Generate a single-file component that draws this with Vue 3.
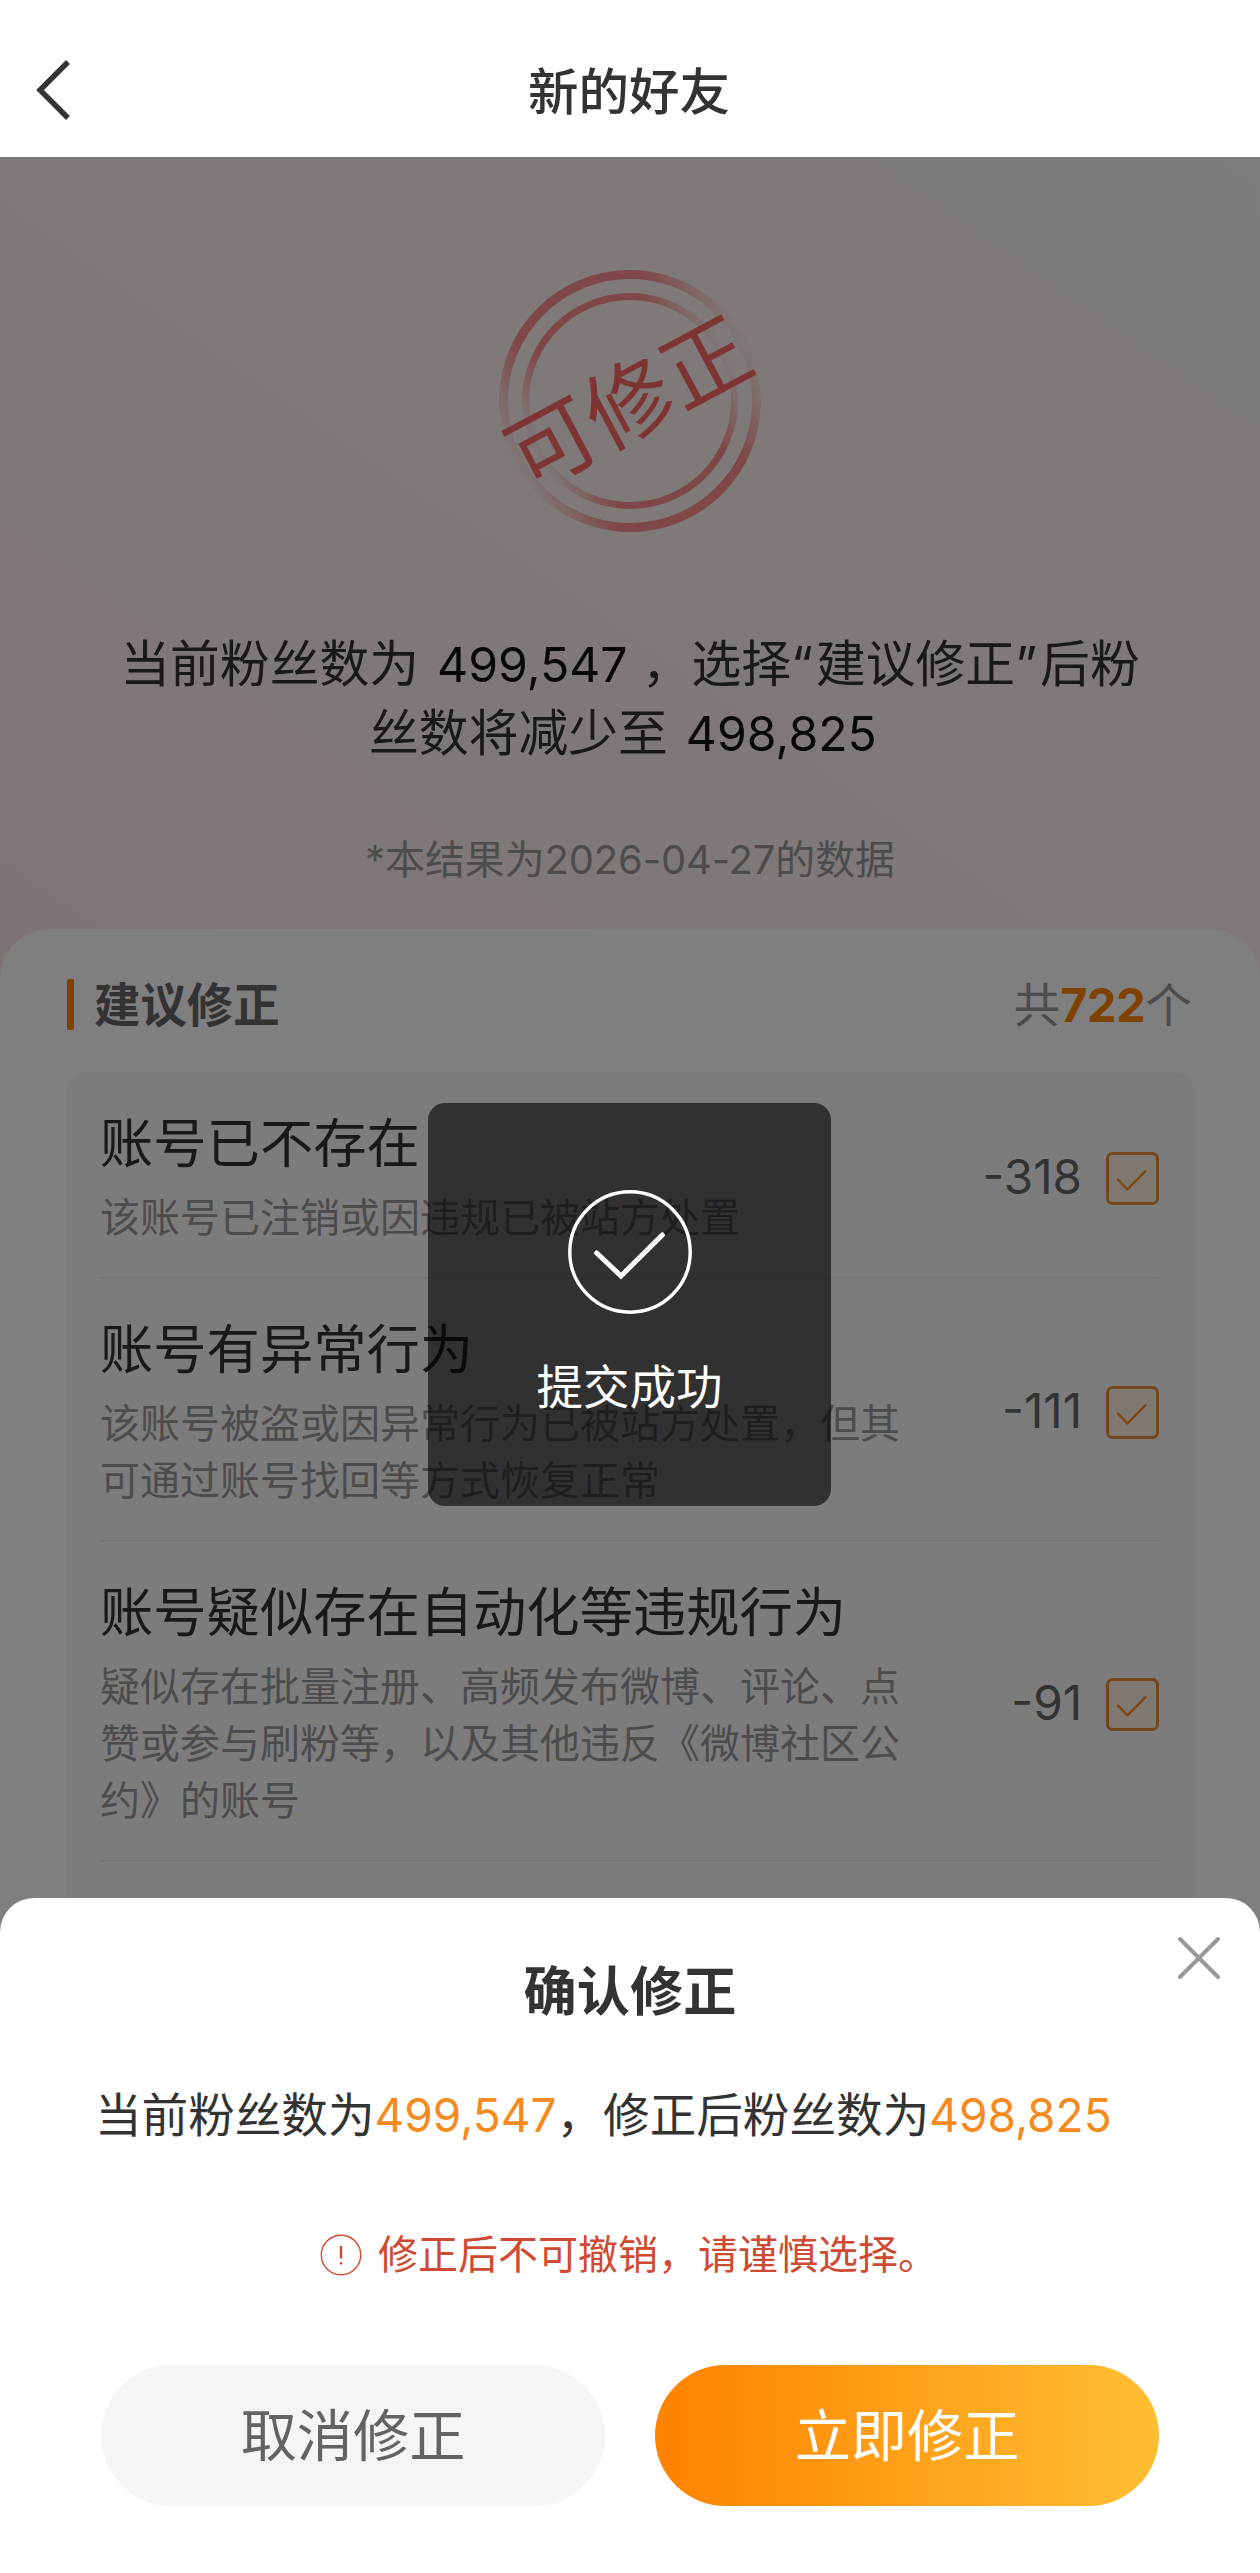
<script setup>
import { ref } from "vue";

const current = "499,547";
const fixed = "498,825";
const total = 722;

const items = ref([
  {
    name: "账号已不存在",
    desc: "该账号已注销或因违规已被站方处置",
    count: 318,
  },
  {
    name: "账号有异常行为",
    desc: "该账号被盗或因异常行为已被站方处置，但其可通过账号找回等方式恢复正常",
    count: 111,
  },
  {
    name: "账号疑似存在自动化等违规行为",
    desc: "疑似存在批量注册、高频发布微博、评论、点赞或参与刷粉等，以及其他违反《微博社区公约》的账号",
    count: 91,
  },
]);
</script>
<template>
  <div class="page">
    <header class="header">
      <svg class="header__back" viewBox="0 0 40 64">
        <path d="M35 4 L7 32 L35 60" />
      </svg>
      <h1 class="header__title">新的好友</h1>
    </header>
    <main class="content">
      <section class="result">
        <svg class="stamp" viewBox="-140 -140 280 280">
          <defs>
            <linearGradient id="ring" x1="0" x2="1" y1="0" y2="0">
              <stop offset="0" stop-color="#ff6464" stop-opacity="0.04" />
              <stop offset="0.05" stop-color="#ff6464" stop-opacity="0.2" />
              <stop offset="0.22" stop-color="#ff6464" stop-opacity="0.7" />
              <stop offset="0.78" stop-color="#ff6464" stop-opacity="0.7" />
              <stop offset="0.95" stop-color="#ff6464" stop-opacity="0.2" />
              <stop offset="1" stop-color="#ff6464" stop-opacity="0.04" />
            </linearGradient>
          </defs>
          <g transform="rotate(-28)">
            <circle r="126.5" stroke-width="9" />
            <circle r="104.5" stroke-width="7" />
            <text x="-2" y="33" text-anchor="middle">可修正</text>
          </g>
        </svg>
        <p class="result__text">
          当前粉丝数为 <b>{{ current }}</b> ，选择<i>“</i>建议修正<i>”</i>后粉<br />丝数将减少至
          <b>{{ fixed }}</b>&nbsp;
        </p>
        <p class="result__date">*本结果为<span>2026-04-27</span>的数据</p>
      </section>
      <section class="card">
        <div class="card__head">
          <h2 class="card__title">建议修正</h2>
          <span class="card__total">共<b>{{ total }}</b>个</span>
        </div>
        <ul class="list">
          <li v-for="item in items" :key="item.name" class="list__item">
            <div class="list__info">
              <h3 class="list__name">{{ item.name }}</h3>
              <p class="list__desc">{{ item.desc }}</p>
            </div>
            <span class="list__count">-{{ item.count }}</span>
            <svg class="list__check" viewBox="0 0 53 53">
              <rect x="1.5" y="1.5" width="50" height="50" rx="5" />
              <path d="M12 27.7 L21.5 37.5 L39.5 19" />
            </svg>
          </li>
        </ul>
      </section>
    </main>
    <div class="mask"></div>
    <div class="toast">
      <svg class="toast__icon" viewBox="0 0 124 124">
        <circle cx="62" cy="62" r="60.2" />
        <path d="M28.7 63 L53 86 L94.3 45" />
      </svg>
      <span class="toast__text">提交成功</span>
    </div>
    <div class="sheet">
      <svg class="sheet__close" viewBox="0 0 44 44">
        <path d="M3 3 L41 41 M41 3 L3 41" />
      </svg>
      <h2 class="sheet__title">确认修正</h2>
      <p class="sheet__text">
        当前粉丝数为<em>{{ current }}</em>，修正后粉丝数为<em>{{ fixed }}</em>
      </p>
      <p class="sheet__warn">
        <svg viewBox="0 0 42 42">
          <circle cx="21" cy="21" r="19.7" />
          <path d="M21 12 V24.5 M21 28.2 V30.4" />
        </svg>
        <span>修正后不可撤销，请谨慎选择。</span>
      </p>
      <div class="sheet__buttons">
        <button class="btn">取消修正</button>
        <button class="btn btn--primary">立即修正</button>
      </div>
    </div>
  </div>
</template>
<style>
body {
  margin: 0;
}
</style>
<style scoped>
.page {
  position: relative;
  width: 1260px;
  height: 2573px;
  overflow: hidden;
  display: flex;
  flex-direction: column;
  background: #fff;
  font-family: Inter, "Noto Sans CJK SC", sans-serif;
}
h1,
h2,
h3,
p,
ul {
  margin: 0;
  padding: 0;
}
.header {
  height: 157px;
  flex-shrink: 0;
  display: flex;
  align-items: flex-start;
  box-sizing: border-box;
  padding: 58px 33px 0 33px;
}
.header__back {
  width: 40px;
  height: 64px;
  fill: none;
  stroke: #333;
  stroke-width: 5.4;
}
.header__title {
  flex: 1;
  margin: 1px 42px 0 0;
  text-align: center;
  font-weight: 500;
  font-size: 50.5px;
  line-height: 66px;
  color: #333;
}
.content {
  flex: 1;
  display: flex;
  flex-direction: column;
  overflow: hidden;
  background: linear-gradient(
    215deg,
    #fcfafb 0,
    #fbf8f9 205px,
    #fff3f2 235px,
    #fff1f1 880px,
    #ffefef 1110px,
    #ffecec 1180px,
    #ffe8e9 1400px
  );
}
.result {
  height: 772px;
  flex-shrink: 0;
  display: flex;
  flex-direction: column;
  align-items: center;
  box-sizing: border-box;
  padding-top: 104px;
}
.stamp {
  width: 280px;
  height: 280px;
  margin-right: 1px;
}
.stamp circle {
  fill: none;
  stroke: url(#ring);
}
.stamp text {
  font-size: 87px;
  fill: #ff6868;
}
.result__text {
  margin-top: 89px;
  text-align: center;
  font-size: 49.8px;
  line-height: 69px;
  color: #333;
}
.result__text b {
  margin-left: 4px;
  font-weight: 400;
  font-size: 48.2px;
  color: #111;
}
.result__text i {
  padding-right: 3px;
  font-style: normal;
}
.result__date {
  margin-top: 62px;
  font-size: 39.9px;
  line-height: 60px;
  color: #999;
}
.result__date span {
  letter-spacing: -0.1px;
}
.card {
  flex: 1;
  display: flex;
  flex-direction: column;
  padding: 0 67px;
  background: #fff;
  border-radius: 50px 50px 0 0;
}
.card__head {
  height: 144px;
  flex-shrink: 0;
  display: flex;
  align-items: center;
  justify-content: space-between;
  box-sizing: border-box;
  padding-top: 7px;
}
.card__title {
  display: flex;
  align-items: center;
  font-weight: 700;
  font-size: 46.4px;
  line-height: 60px;
  color: #666;
}
.card__title::before {
  content: "";
  width: 7px;
  height: 51px;
  margin-right: 20px;
  border-radius: 2px;
  background: #ff8200;
}
.card__total {
  margin-right: 1px;
  font-size: 46.7px;
  line-height: 60px;
  color: #999;
}
.card__total b {
  font-weight: 700;
  letter-spacing: -0.3px;
  color: #ff8200;
}
.list {
  flex: 1;
  padding: 0 34px 0 33px;
  list-style: none;
  background: #f9f9f9;
  border-radius: 17px 17px 0 0;
}
.list__item {
  display: flex;
  align-items: center;
  padding: 39px 0 31px;
  border-bottom: 2px solid #ececec;
}
.list__info {
  width: 804px;
}
.list__name {
  margin-bottom: 13px;
  font-weight: 400;
  font-size: 53.3px;
  line-height: 64px;
  color: #333;
}
.list__desc {
  font-size: 40px;
  line-height: 57px;
  color: #999;
}
.list__count {
  flex: 1;
  margin: -5px 24px 0 0;
  text-align: right;
  font-size: 47.6px;
  line-height: 60px;
  color: #666;
}
.list__check {
  width: 53px;
  height: 53px;
  margin-top: -2px;
  fill: none;
}
.list__check rect {
  fill: #fff0e0;
  stroke: #e88c3c;
  stroke-width: 3;
}
.list__check path {
  stroke: #ff8a1a;
  stroke-width: 2.4;
  stroke-linecap: round;
  stroke-linejoin: round;
}
.mask {
  position: absolute;
  top: 157px;
  right: 0;
  bottom: 0;
  left: 0;
  background: rgba(0, 0, 0, 0.5);
}
.toast {
  position: absolute;
  top: 1103px;
  left: 428px;
  width: 403px;
  height: 403px;
  box-sizing: border-box;
  padding-top: 87px;
  display: flex;
  flex-direction: column;
  align-items: center;
  border-radius: 17px;
  background: rgba(0, 0, 0, 0.6);
}
.toast__icon {
  width: 124px;
  height: 124px;
  fill: none;
  stroke: #fff;
  stroke-width: 3.4;
}
.toast__icon path {
  stroke-width: 5;
  stroke-linecap: round;
}
.toast__text {
  margin-top: 43px;
  font-size: 46.5px;
  line-height: 60px;
  color: #fff;
}
.sheet {
  position: absolute;
  right: 0;
  bottom: 0;
  left: 0;
  height: 675px;
  box-sizing: border-box;
  padding: 59px 101px 0;
  display: flex;
  flex-direction: column;
  background: #fff;
  border-radius: 34px 34px 0 0;
}
.sheet__close {
  position: absolute;
  top: 38px;
  right: 39px;
  width: 44px;
  height: 44px;
  stroke: #999;
  stroke-width: 4;
  stroke-linecap: round;
}
.sheet__title {
  text-align: center;
  font-weight: 700;
  font-size: 53.2px;
  line-height: 70px;
  color: #333;
}
.sheet__text {
  margin: 58px 0 0 -6px;
  white-space: nowrap;
  font-size: 46.6px;
  line-height: 60px;
  color: #333;
}
.sheet__text em {
  font-style: normal;
  font-size: 46px;
  color: #f58a1f;
}
.sheet__warn {
  margin-top: 81px;
  display: flex;
  align-items: center;
  padding-left: 219px;
  font-size: 40px;
  line-height: 58px;
  color: #cf4a32;
}
.sheet__warn svg {
  width: 42px;
  height: 42px;
  margin-right: 16px;
  fill: none;
  stroke: #cf4a32;
  stroke-width: 1.4;
}
.sheet__warn path {
  stroke-width: 2.4;
}
.sheet__buttons {
  margin-top: 81px;
  display: flex;
  gap: 50px;
}
.btn {
  width: 504px;
  height: 141px;
  padding: 0 0 8px;
  border: none;
  border-radius: 71px;
  background: #f5f5f5;
  font-family: inherit;
  font-size: 56.2px;
  color: #636363;
}
.btn--primary {
  background: linear-gradient(90deg, #ff8200, #ffbf33);
  color: #fff;
}
</style>
